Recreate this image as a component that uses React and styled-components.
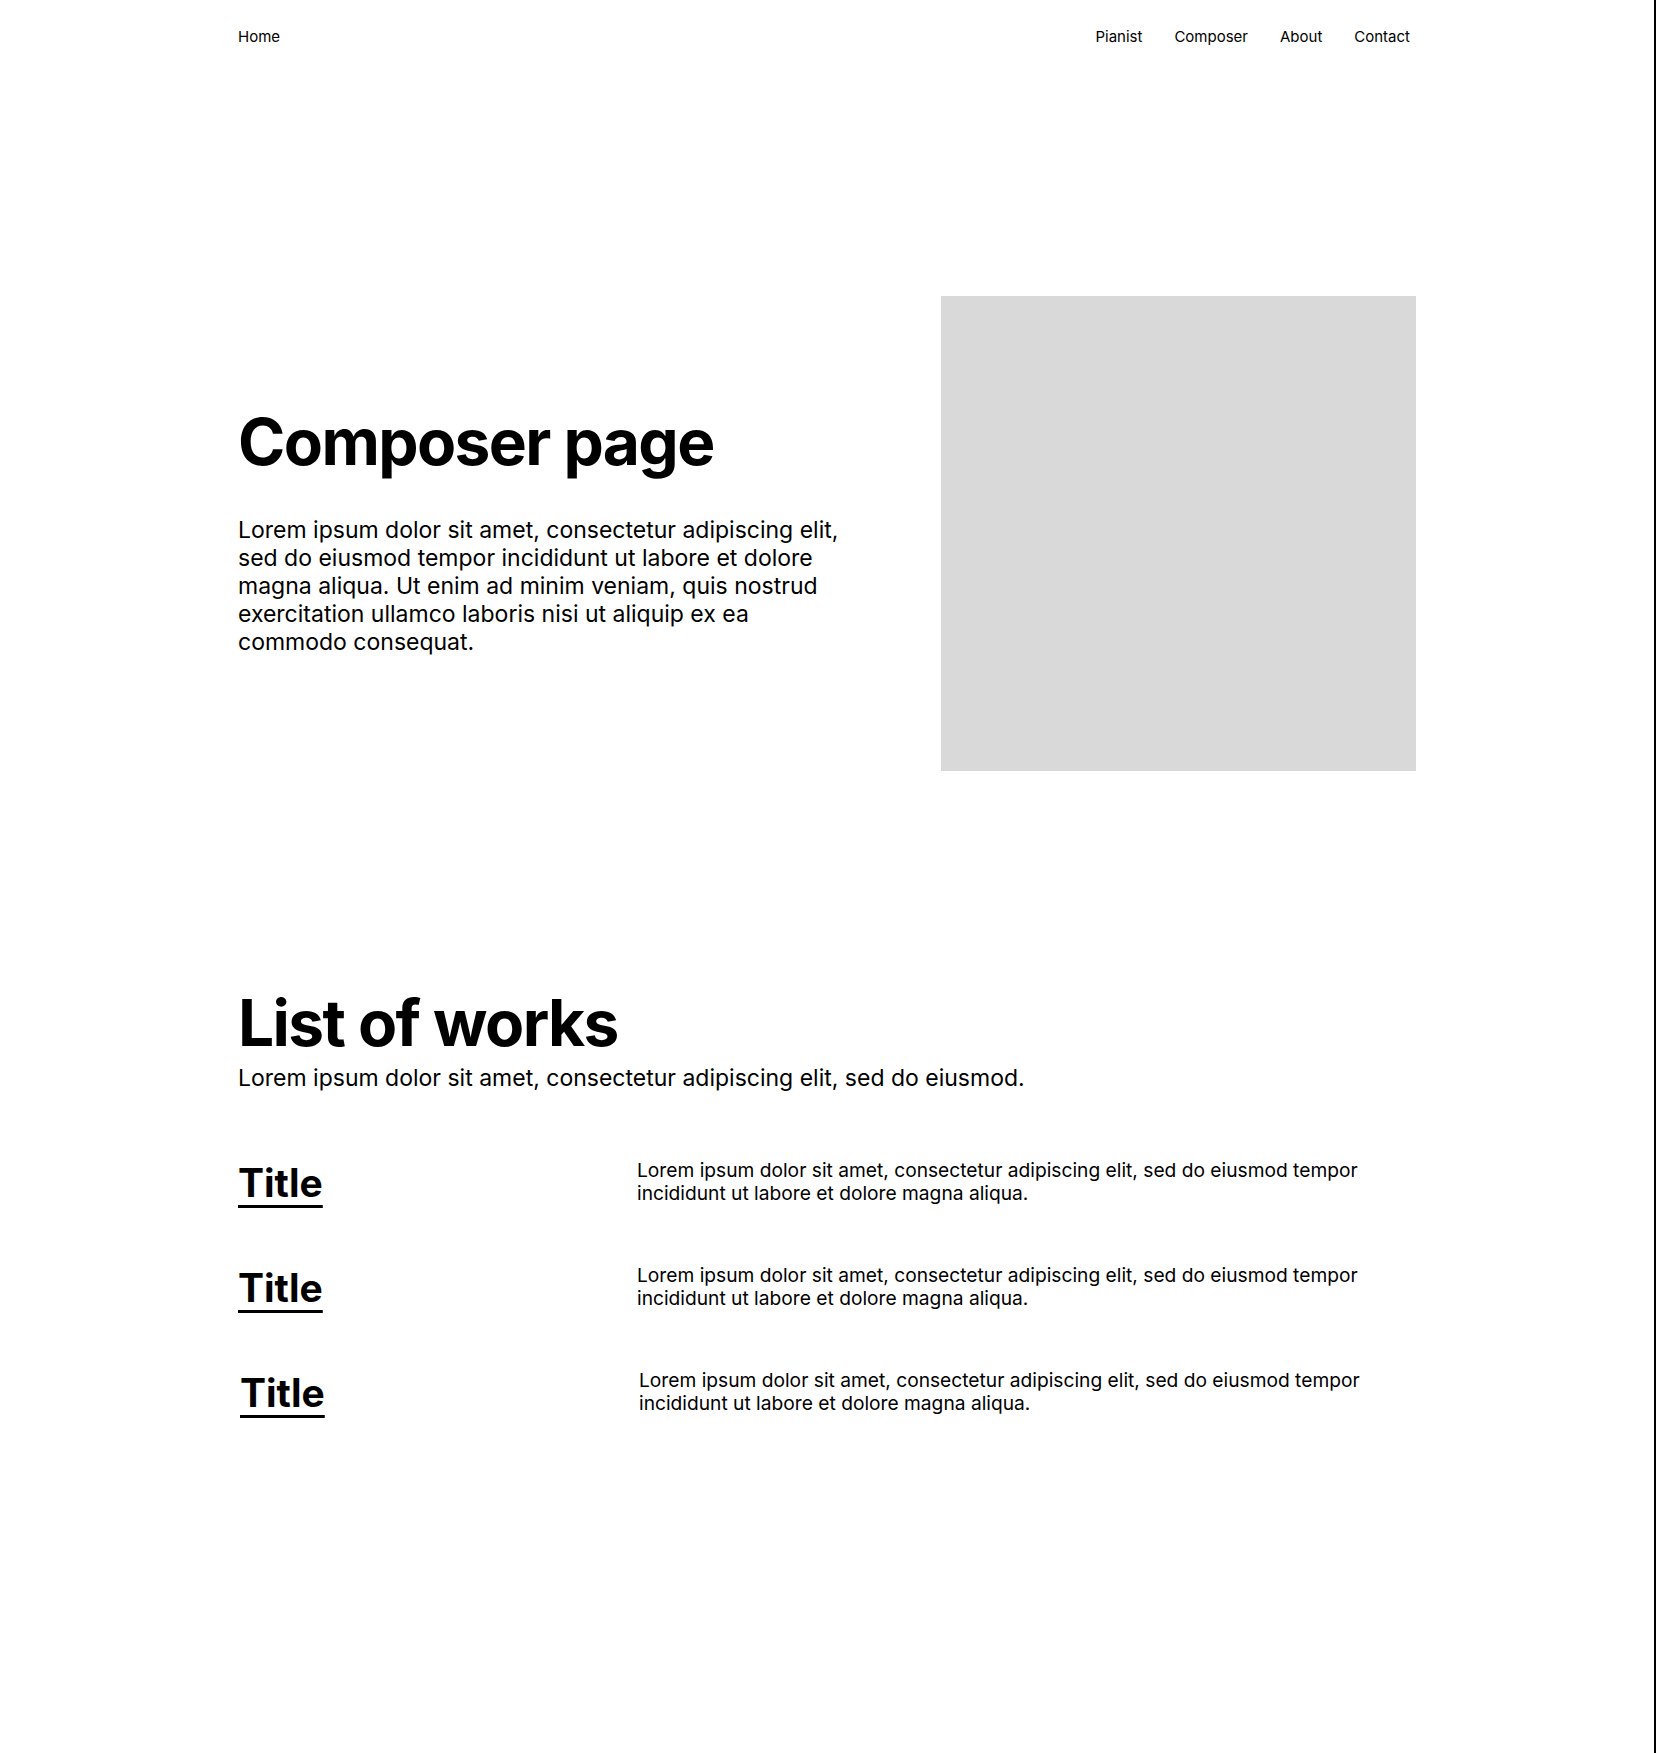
import styled, { createGlobalStyle } from 'styled-components';

const GlobalStyle = createGlobalStyle`
  * { box-sizing: border-box; }
  body {
    margin: 0;
    background: #fff;
    color: #000;
    font-family: Inter, "Noto Sans", Arial, sans-serif;
  }
`;

const Frame = styled.div`
  width: 1656px;
  min-height: 1753px;
  border-right: 2px solid #000;
`;

const Container = styled.div`
  width: 1178px;
  margin: 0 auto;
`;

const Nav = styled.nav`
  height: 72px;
  display: flex;
  align-items: center;
  justify-content: space-between;
  padding-right: 6px;
`;

const NavLinks = styled.div`
  display: flex;
  gap: 32px;
`;

const NavLink = styled.a`
  font-size: 15px;
  color: #000;
  text-decoration: none;
  cursor: pointer;
`;

const Hero = styled.section`
  margin-top: 224px;
  display: grid;
  grid-template-columns: 1fr 475px;
  align-items: center;
`;

const HeroText = styled.div`
  padding-bottom: 7px;
`;

const Heading = styled.h1`
  margin: 0;
  font-size: 64px;
  font-weight: 700;
  line-height: 1.2;
  letter-spacing: -0.025em;
`;

const Lead = styled.p`
  margin: 36px 0 0;
  width: 610px;
  font-size: 23px;
  line-height: 28px;
`;

const ImageBox = styled.div`
  width: 475px;
  height: 475px;
  background: #d9d9d9;
`;

const Works = styled.section`
  margin-top: 214px;
  padding-bottom: 200px;
`;

const SectionTitle = styled.h2`
  margin: 0;
  font-size: 64px;
  font-weight: 700;
  line-height: 1.2;
  letter-spacing: -0.025em;
`;

const SectionSub = styled.p`
  margin: 2px 0 0;
  font-size: 23px;
  line-height: 28px;
`;

const WorkList = styled.div`
  margin-top: 67px;
  display: flex;
  flex-direction: column;
  gap: 58px;
`;

const WorkRow = styled.div`
  display: grid;
  grid-template-columns: 399px 1fr;
  padding-left: ${({ $shift }) => $shift || 0}px;
`;

const WorkTitle = styled.a`
  justify-self: start;
  margin-top: 2px;
  font-size: 39px;
  font-weight: 700;
  line-height: 44px;
  color: #000;
  text-decoration: underline;
  text-decoration-thickness: 3px;
  text-underline-offset: 8px;
`;

const WorkDesc = styled.p`
  margin: 0;
  width: 740px;
  font-size: 19.2px;
  line-height: 23.5px;
`;

const works = [
  { id: 1, shift: 0 },
  { id: 2, shift: 0 },
  { id: 3, shift: 2 },
];

const lorem =
  'Lorem ipsum dolor sit amet, consectetur adipiscing elit, sed do eiusmod tempor incididunt ut labore et dolore magna aliqua.';

export default function App() {
  return (
    <Frame>
      <GlobalStyle />
      <Container>
        <Nav>
          <NavLink>Home</NavLink>
          <NavLinks>
            <NavLink>Pianist</NavLink>
            <NavLink>Composer</NavLink>
            <NavLink>About</NavLink>
            <NavLink>Contact</NavLink>
          </NavLinks>
        </Nav>

        <Hero>
          <HeroText>
            <Heading>Composer page</Heading>
            <Lead>
              Lorem ipsum dolor sit amet, consectetur adipiscing elit, sed do eiusmod tempor
              incididunt ut labore et dolore magna aliqua. Ut enim ad minim veniam, quis nostrud
              exercitation ullamco laboris nisi ut aliquip ex ea commodo consequat.
            </Lead>
          </HeroText>
          <ImageBox />
        </Hero>

        <Works>
          <SectionTitle>List of works</SectionTitle>
          <SectionSub>
            Lorem ipsum dolor sit amet, consectetur adipiscing elit, sed do eiusmod.
          </SectionSub>
          <WorkList>
            {works.map((w) => (
              <WorkRow key={w.id} $shift={w.shift}>
                <WorkTitle>Title</WorkTitle>
                <WorkDesc>{lorem}</WorkDesc>
              </WorkRow>
            ))}
          </WorkList>
        </Works>
      </Container>
    </Frame>
  );
}
